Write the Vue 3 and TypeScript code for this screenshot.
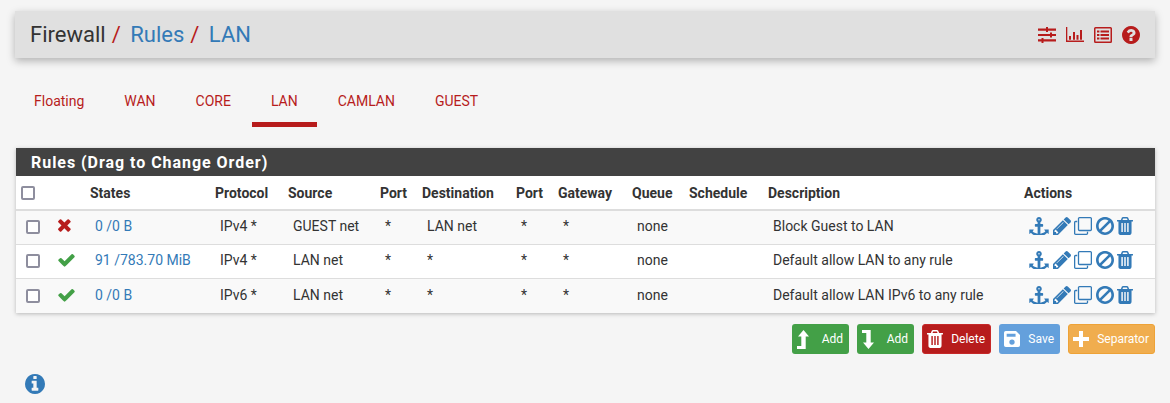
<script setup lang="ts">
// Firewall rules page: breadcrumb bar, tabs, rule table and action buttons
interface Rule {
  ok: boolean
  states: string
  proto: string
  source: string
  dest: string
  desc: string
}

const tabs = ['Floating', 'WAN', 'CORE', 'LAN', 'CAMLAN', 'GUEST']

const columns = ['', '', 'States', 'Protocol', 'Source', 'Port', 'Destination', 'Port', 'Gateway', 'Queue', 'Schedule', 'Description', 'Actions']
const widths = [35, 34, 125, 73, 92, 42, 94, 42, 74, 57, 79, 256, 136]

const rules: Rule[] = [
  { ok: false, states: '0 /0 B', proto: 'IPv4 *', source: 'GUEST net', dest: 'LAN net', desc: 'Block Guest to LAN' },
  { ok: true, states: '91 /783.70 MiB', proto: 'IPv4 *', source: 'LAN net', dest: '*', desc: 'Default allow LAN to any rule' },
  { ok: true, states: '0 /0 B', proto: 'IPv6 *', source: 'LAN net', dest: '*', desc: 'Default allow LAN IPv6 to any rule' },
]

const paths = {
  times: 'M1490 1322q0 40-28 68l-136 136q-28 28-68 28t-68-28l-294-294-294 294q-28 28-68 28t-68-28l-136-136q-28-28-28-68t28-68l294-294-294-294q-28-28-28-68t28-68l136-136q28-28 68-28t68 28l294 294 294-294q28-28 68-28t68 28l136 136q28 28 28 68t-28 68l-294 294 294 294q28 28 28 68z',
  check: 'M1671 566q0 40-28 68l-724 724-136 136q-28 28-68 28t-68-28l-136-136-362-362q-28-28-28-68t28-68l136-136q28-28 68-28t68 28l294 295 656-657q28-28 68-28t68 28l136 136q28 28 28 68z',
  anchor: 'M960 256q0-26-19-45t-45-19-45 19-19 45 19 45 45 19 45-19 19-45zm832 928v352q0 22-20 30-8 2-12 2-12 0-23-9l-93-93q-119 143-318.500 226.500t-429.500 83.500-429.500-83.500-318.500-226.500l-93 93q-9 9-23 9-4 0-12-2-20-8-20-30v-352q0-14 9-23t23-9h352q22 0 30 20 8 19-7 35l-100 100q67 91 189.500 153.500t271.500 82.500v-647h-192q-26 0-45-19t-19-45v-128q0-26 19-45t45-19h192v-163q-58-34-93-92.500t-35-128.500q0-106 75-181t181-75 181 75 75 181q0 70-35 128.500t-93 92.500v163h192q26 0 45 19t19 45v128q0 26-19 45t-45 19h-192v647q149-20 271.500-82.500t189.500-153.500l-100-100q-15-16-7-35 8-20 30-20h352q14 0 23 9t9 23z',
  pencil: 'M491 1536l91-91-235-235-91 91v107h128v128h107zm523-928q0-22-22-22-10 0-17 7l-542 542q-7 7-7 17 0 22 22 22 10 0 17-7l542-542q7-7 7-17zm-54-192l416 416-832 832h-416v-416zm683 96q0 53-37 90l-166 166-416-416 166-165q36-38 90-38 53 0 91 38l235 234q37 39 37 91z',
  clone: 'M1664 1632v-1088q0-13-9.500-22.500t-22.500-9.500h-1088q-13 0-22.500 9.500t-9.500 22.500v1088q0 13 9.500 22.500t22.500 9.500h1088q13 0 22.500-9.500t9.500-22.500zm128-1088v1088q0 66-47 113t-113 47h-1088q-66 0-113-47t-47-113v-1088q0-66 47-113t113-47h1088q66 0 113 47t47 113zm-384-384v160h-128v-160q0-13-9.500-22.500t-22.500-9.500h-1088q-13 0-22.500 9.500t-9.500 22.500v1088q0 13 9.500 22.500t22.500 9.500h160v128h-160q-66 0-113-47t-47-113v-1088q0-66 47-113t113-47h1088q66 0 113 47t47 113z',
  ban: 'M1440 893q0-161-87-295l-754 753q137 89 297 89 111 0 211.500-43.500t173.500-116.500 116-174.500 43-212.500zm-999 299l755-754q-135-91-300-91-148 0-273 73t-198 199-73 274q0 162 89 299zm1223-299q0 157-61 300t-163.500 246-245 164-298.500 61-298.500-61-245-164-163.500-246-61-300 61-299.500 163.500-245.500 245-164 298.500-61 298.500 61 245 164 163.500 245.500 61 299.500z',
  trash: 'M704 1376v-704q0-14-9-23t-23-9h-64q-14 0-23 9t-9 23v704q0 14 9 23t23 9h64q14 0 23-9t9-23zm256 0v-704q0-14-9-23t-23-9h-64q-14 0-23 9t-9 23v704q0 14 9 23t23 9h64q14 0 23-9t9-23zm256 0v-704q0-14-9-23t-23-9h-64q-14 0-23 9t-9 23v704q0 14 9 23t23 9h64q14 0 23-9t9-23zm-544-992h448l-48-117q-7-9-17-11h-317q-10 2-17 11zm928 32v64q0 14-9 23t-23 9h-96v948q0 83-47 143.500t-113 60.500h-832q-66 0-113-58.500t-47-141.500v-952h-96q-14 0-23-9t-9-23v-64q0-14 9-23t23-9h309l70-167q15-37 54-63t79-26h320q40 0 79 26t54 63l70 167h309q14 0 23 9t9 23z',
  question: 'M1024 1376v-192q0-14-9-23t-23-9h-192q-14 0-23 9t-9 23v192q0 14 9 23t23 9h192q14 0 23-9t9-23zm256-672q0-88-55.500-163t-138.500-116-170-41q-243 0-371 213-15 24 8 42l132 100q7 6 19 6 16 0 25-12 53-68 86-92 34-24 86-24 48 0 85.500 26t37.500 59q0 38-20 61t-68 45q-63 28-115.500 86.500t-52.500 125.500v36q0 14 9 23t23 9h192q14 0 23-9t9-23q0-19 21.500-49.500t54.500-49.500q32-18 49-28.500t46-35 44.500-48 28-60.500 12.500-81zm384 192q0 209-103 385.500t-279.500 279.500-385.500 103-385.500-103-279.500-279.500-103-385.500 103-385.500 279.500-279.500 385.500-103 385.500 103 279.500 279.500 103 385.500z',
  info: 'M1152 1376v-160q0-14-9-23t-23-9h-96v-512q0-14-9-23t-23-9h-320q-14 0-23 9t-9 23v160q0 14 9 23t23 9h96v320h-96q-14 0-23 9t-9 23v160q0 14 9 23t23 9h448q14 0 23-9t9-23zm-128-896v-160q0-14-9-23t-23-9h-192q-14 0-23 9t-9 23v160q0 14 9 23t23 9h192q14 0 23-9t9-23zm640 416q0 209-103 385.500t-279.500 279.500-385.500 103-385.500-103-279.500-279.500-103-385.500 103-385.500 279.500-279.500 385.500-103 385.500 103 279.500 279.500 103 385.500z',
}
</script>

<template>
  <div class="page">
    <header class="crumbs">
      <h1 class="crumb-title">
        <span>Firewall</span><i class="sep">/</i>
        <a class="link">Rules</a><i class="sep">/</i>
        <a class="link">LAN</a>
      </h1>
      <div class="crumb-icons">
        <svg width="18" height="16" viewBox="0 0 18 16">
          <path d="M0 1.500h18v2.200H0zM0 6.900h18v2.200H0zM0 12.300h18v2.200H0z" />
          <path d="M8 0h2v5H8zM12 5.500h2v5h-2zM3.500 11h2v5h-2z" />
        </svg>
        <svg width="18" height="15" viewBox="0 0 18 15">
          <path d="M0 0h1.300v13.500H18V15H0zM3 9h2v3.700H3zM7 5h2v7.700H7zM10.500 8h2v4.700h-2zM14 3h2v9.700h-2z" />
        </svg>
        <svg width="18" height="16" viewBox="0 0 18 16">
          <path fill-rule="evenodd" d="M1.500 0h15A1.500 1.500 0 0 1 18 1.500v13a1.500 1.500 0 0 1-1.500 1.500h-15A1.500 1.500 0 0 1 0 14.500v-13A1.500 1.500 0 0 1 1.500 0zM1.500 1.600v12.800h15V1.600z" />
          <path d="M3 3.500h2.400v2H3zM6.500 3.500H15v2H6.500zM3 7h2.400v2H3zM6.500 7H15v2H6.500zM3 10.500h2.400v2H3zM6.500 10.500H15v2H6.500z" />
        </svg>
        <svg width="18" height="18" viewBox="128 128 1536 1536">
          <path :d="paths.question" />
        </svg>
      </div>
    </header>

    <nav class="tabs">
      <a v-for="t in tabs" :key="t" class="tab" :class="{ active: t === 'LAN' }">{{ t }}</a>
    </nav>

    <section class="panel">
      <h2 class="panel-title">Rules (Drag to Change Order)</h2>
      <table class="rules">
        <colgroup>
          <col v-for="(w, i) in widths" :key="i" :style="{ width: w + 'px' }" />
        </colgroup>
        <thead>
          <tr>
            <th v-for="(c, i) in columns" :key="i">
              <span v-if="i === 0" class="box"></span>
              <template v-else>{{ c }}</template>
            </th>
          </tr>
        </thead>
        <tbody>
          <tr v-for="r in rules" :key="r.desc + r.states">
            <td class="td-box"><span class="box"></span></td>
            <td>
              <svg v-if="r.ok" class="status ok" viewBox="0 256 1792 1280"><path :d="paths.check" /></svg>
              <svg v-else class="status no" viewBox="200 350 1320 1320"><path :d="paths.times" /></svg>
            </td>
            <td><a class="link">{{ r.states }}</a></td>
            <td>{{ r.proto }}</td>
            <td>{{ r.source }}</td>
            <td>*</td>
            <td>{{ r.dest }}</td>
            <td>*</td>
            <td>*</td>
            <td>none</td>
            <td></td>
            <td>{{ r.desc }}</td>
            <td>
              <div class="actions">
                <svg width="20" height="18" viewBox="0 0 1792 1664"><path :d="paths.anchor" /></svg>
                <svg width="18" height="18" viewBox="128 149 1515 1515"><path :d="paths.pencil" /></svg>
                <svg class="flip" width="18" height="18" viewBox="0 0 1792 1792"><path :d="paths.clone" /></svg>
                <svg class="ban" width="18" height="18" viewBox="128 128 1536 1536"><path :d="paths.ban" /></svg>
                <svg width="16" height="18" viewBox="192 128 1408 1536" preserveAspectRatio="none"><path :d="paths.trash" /></svg>
              </div>
            </td>
          </tr>
        </tbody>
      </table>
    </section>

    <div class="buttons">
      <button class="btn green">
        <svg width="12" height="19" viewBox="0 0 12 19"><path d="M6.500 0L12 6.500H8.700V19H0v-3h4.300V6.500H1z" /></svg>
        Add
      </button>
      <button class="btn green">
        <svg width="12" height="19" viewBox="0 0 12 19"><path d="M6.500 19L12 12.500H8.700V0H0v3h4.300v9.500H1z" /></svg>
        Add
      </button>
      <button class="btn red">
        <svg width="16" height="18" viewBox="192 128 1408 1536" preserveAspectRatio="none"><path :d="paths.trash" /></svg>
        Delete
      </button>
      <button class="btn blue">
        <svg width="16" height="16" viewBox="0 0 18 18">
          <path fill-rule="evenodd" d="M2 0h11.500L18 4.500V16a2 2 0 0 1-2 2H2a2 2 0 0 1-2-2V2a2 2 0 0 1 2-2zM3 3v3.500h10V3zM9 9.500a3 3 0 1 0 0 6 3 3 0 0 0 0-6z" />
        </svg>
        Save
      </button>
      <button class="btn orange">
        <svg width="16" height="16" viewBox="0 0 16 16"><path d="M6 0h4v6h6v4h-6v6H6v-6H0V6h6z" /></svg>
        Separator
      </button>
    </div>

    <svg class="info" width="20" height="20" viewBox="128 128 1536 1536"><path :d="paths.info" /></svg>
  </div>
</template>

<style scoped>
.page {
  height: 403px;
  box-sizing: border-box;
  padding: 11px 15px 0;
  background: #f5f5f5;
  color: #333;
  font-family: Roboto, "Liberation Sans", sans-serif;
  font-size: 14px;
  overflow: hidden;
}

.link {
  color: #337ab7;
  text-decoration: none;
}

.crumbs {
  display: flex;
  align-items: center;
  justify-content: space-between;
  height: 47px;
  padding: 0 15px;
  background: #e0e0e0;
  box-shadow: 0 3px 8px rgba(0, 0, 0, 0.28);
}
.crumb-title {
  margin: 0;
  font-size: 22px;
  font-weight: 400;
  line-height: 1;
}
.sep {
  margin: 0 9.5px 0 6px;
  color: #b71c1c;
  font-style: normal;
}
.crumb-icons {
  display: flex;
  align-items: center;
  gap: 10px;
  fill: #b71c1c;
}

.tabs {
  display: flex;
  gap: 2px;
  margin-top: 27px;
}
.tab {
  height: 42px;
  box-sizing: border-box;
  padding: 6px 19px 0;
  border-bottom: 5px solid transparent;
  color: #b71c1c;
  line-height: 20px;
}
.tab.active {
  border-bottom-color: #b71c1c;
}

.panel {
  margin: 21px 0 0 1px;
  width: 1139px;
  background: #fff;
  box-shadow: 0 1px 4px rgba(0, 0, 0, 0.25);
}
.panel-title {
  margin: 0;
  height: 28px;
  padding-left: 15px;
  background: #424242;
  color: #fff;
  font-size: 16px;
  font-weight: 700;
  letter-spacing: 0.96px;
  line-height: 29px;
}

.rules {
  width: 1139px;
  table-layout: fixed;
  border-collapse: collapse;
  color: #333;
}
.rules th {
  height: 34px;
  box-sizing: border-box;
  padding: 0 5px;
  border-bottom: 2px solid #ddd;
  font-weight: 700;
  text-align: left;
  font-size: 14px;
}
.rules td {
  height: 34px;
  box-sizing: border-box;
  padding: 0 5px 2px 10px;
  border-bottom: 1px solid #ddd;
  white-space: nowrap;
}
.rules .td-box {
  padding-bottom: 0;
}
.rules tbody tr:nth-child(odd) {
  background: #f9f9f9;
}
.rules tbody tr:last-child td {
  height: 35px;
  border-bottom: 0;
}
.box {
  display: block;
  width: 10px;
  height: 10px;
  border: 2px solid #8e8e9e;
  border-radius: 2px;
  background: #fff;
}
.status {
  display: block;
  margin-left: -4px;
}
.status.ok {
  width: 19px;
  height: 14px;
  fill: #43a047;
}
.status.no {
  width: 14px;
  height: 14px;
  fill: #b71c1c;
}
.actions {
  display: flex;
  align-items: center;
  gap: 4px;
  fill: #337ab7;
}
.flip {
  transform: scaleY(-1);
  margin-left: -1px;
}
.ban {
  margin-right: -1px;
}

.buttons {
  display: flex;
  justify-content: flex-end;
  gap: 8px;
  margin-top: 11px;
}
.btn {
  display: flex;
  align-items: center;
  justify-content: space-between;
  height: 30px;
  box-sizing: border-box;
  padding: 0 5px 0 4px;
  border: 1px solid transparent;
  border-radius: 3px;
  color: #fff;
  fill: #fff;
  font-family: inherit;
  font-size: 12px;
}
.green { width: 57px; background: #43a047; }
.red { width: 69px; background: #b71c1c; border-color: #c62828; }
.blue { width: 61px; background: #64a0dc; }
.orange { width: 87px; background: #f0ad4e; border-color: #eea236; }

.info {
  display: block;
  margin: 20px 0 0 10px;
  fill: #337ab7;
}
</style>

<style>
html, body {
  margin: 0;
  background: #f5f5f5;
}
</style>
